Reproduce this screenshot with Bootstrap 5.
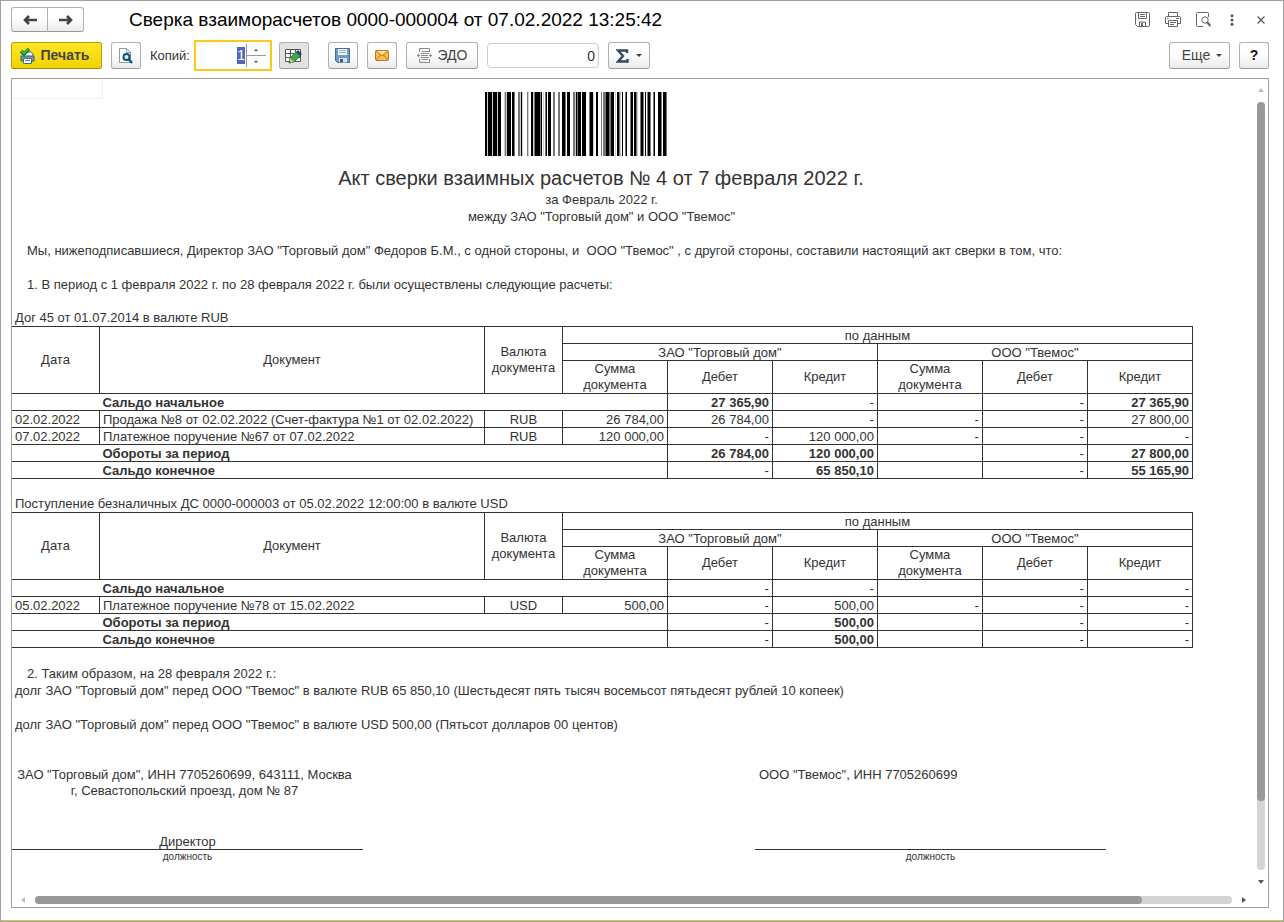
<!DOCTYPE html>
<html lang="ru">
<head>
<meta charset="utf-8">
<meta name="viewport" content="width=device-width, initial-scale=1">
<title>Сверка взаиморасчетов</title>
<link href="https://cdn.jsdelivr.net/npm/bootstrap@5.3.0/dist/css/bootstrap.min.css" rel="stylesheet">
<style>
  body { font-family: "Liberation Sans", Arial, sans-serif; font-size: 13px; line-height: 17px; color: #333; background: #fff; }
  .app-window { border: 1px solid #a0a0a0; box-shadow: inset 0 -1px 0 #d5c650; padding: 6px 14px 13px 10px; }
  .app-title { font-size: 19px; line-height: 24px; color: #000; margin-left: 45px; }
  .tool-btn { --bs-btn-padding-x: 0; --bs-btn-padding-y: 0; --bs-btn-border-radius: 3px; --bs-btn-font-size: 14px; --bs-btn-line-height: 17px;
    --bs-btn-color: #444; --bs-btn-border-color: #b0b0b0; --bs-btn-hover-color: #444; --bs-btn-hover-border-color: #999;
    display: flex; align-items: center; justify-content: center; height: 27px; min-width: 30px;
    background: linear-gradient(#fff 40%, #ececec); border-bottom-color: #999; }
  .tool-btn svg, .plain-btn svg { display: block; flex: none; }
  .nav-pair .tool-btn { height: 25px; width: 37px; }
  .print-btn { width: 91px; gap: 6px; font-weight: bold; background: linear-gradient(#ffe627, #f2d200); border-color: #b9a000; border-bottom-color: #a08a00; padding-right: 4px; }
  .pressed-btn { background: #e2e2e2; margin-left: 7px; }
  .edo-btn { width: 72px; gap: 6px; }
  .sum-btn { width: 42px; gap: 7px; }
  .more-btn { width: 61px; gap: 6px; padding-left: 5px; }
  .help-btn { color: #111; font-weight: bold; }
  .plain-btn { border: 0; background: none; padding: 0; }
  .window-tools { gap: 15px; }
  .caret-mark { border: 3px solid transparent; border-top-color: #444; border-bottom: 0; }
  .copies-box { width: 78px; height: 31px; border: 2px solid #fbc81e; background: #fff; }
  .copies-box input, .total-input { font-size: 14px; line-height: 17px; color: #333; text-align: right; }
  .copies-box input { border: 0; outline: 0; padding: 0 1px 0 0; width: 50px; }
  .copies-box input::selection { background: #5067c4; color: #fff; }
  .spin-pair { width: 20px; margin: 2px 2px 2px 0; border-left: 1px solid #999; }
  .spin-pair button { border: 0; background: none; padding: 0; flex: 1; display: flex; align-items: center; justify-content: center; }
  .spin-pair button + button { border-top: 1px solid #999; }
  .total-input { width: 112px; height: 25px; border: 1px solid #ccc; border-radius: 4px; padding: 0 3px; }
  .gap-tools { gap: 9px; }
  .file-tools { margin-left: 10px; }
  .viewer { border: 1px solid #a0a0a0; margin-top: 7px; }
  .sheet { overflow: hidden; padding-top: 13px; color: #333; }
  .start-cell { width: 91px; height: 20px; border: solid #eee; border-width: 0 1px 1px 0; }
  .barcode { display: block; width: 182px; height: 64px; margin-bottom: 9px; }
  .barcode-row { padding-right: 54px; }
  .act-title { font-size: 20px; line-height: 26px; margin: 0; font-weight: 400; padding-right: 3px; }
  .sheet p { margin: 0; padding-left: 3px; }
  .sheet p.text-center { padding: 0 5px 0 3px; }
  .sheet p.indent { padding-left: 15px; }
  .sheet p.spaced { margin-top: 17px; }
  .sheet p.table-note { line-height: 16px; }
  .recon { width: calc(100% + 1px); table-layout: fixed; border-collapse: collapse; line-height: 16px; margin-left: -1px; }
  .recon th, .recon td { border: 1px solid #333; padding: 0 3px; height: 17px; }
  .recon thead th { font-weight: 400; text-align: center; }
  .recon td, .recon .doc, .recon thead .group { line-height: 15px; padding-top: 1px; }
  .recon td { text-align: right; white-space: nowrap; }
  .recon td:first-child, .recon .doc { text-align: left; }
  .recon .cur { text-align: center; }
  .recon tbody .none { border-right-style: hidden; }
  .recon .strong th, .recon .strong td { font-weight: bold; }
  .recon .strong .dash { font-weight: 400; }
  .sign-row { margin-top: 34px; }
  .sign-left, .sign-right { width: 351px; }
  .sign-right { margin-right: 87px; }
  .sign-org { height: 66px; line-height: 16px; padding-left: 4px; }
  .sign-left .sign-org { padding: 0 10px 0 4px; text-align: center; }
  .sign-post { height: 17px; border-bottom: 1px solid #333; text-align: center; }
  .sign-note { font-size: 10px; line-height: 14px; text-align: center; }
  .vbar { width: 8px; margin: 8px 3px 6px 64px; }
  .hbar { height: 16px; padding: 1px 22px 0 9px; gap: 9px; }
  .bar-track { background: #d5d5d5; border-radius: 4px; }
  .bar-thumb { background: #999; border-radius: 4px; }
  .vbar .bar-track { width: 8px; margin: 9px 0; }
  .hbar .bar-track { height: 8px; }
</style>
</head>
<body>
<main class="app-window d-flex flex-column min-vh-100">
  <header class="d-flex align-items-center">
    <div class="btn-group nav-pair">
      <button class="btn tool-btn" type="button" aria-label="Назад"><svg width="14" height="10" viewBox="0 0 14 10"><path d="M6 1 2 5l4 4M2 5h12" fill="none" stroke="#444" stroke-width="2.6"/></svg></button>
      <button class="btn tool-btn" type="button" aria-label="Вперед"><svg width="14" height="10" viewBox="0 0 14 10"><path d="m8 1 4 4-4 4M12 5H0" fill="none" stroke="#444" stroke-width="2.6"/></svg></button>
    </div>
    <h1 class="app-title mb-0 fw-normal">Сверка взаиморасчетов 0000-000004 от 07.02.2022 13:25:42</h1>
    <div class="d-flex align-items-center ms-auto window-tools">
      <button class="plain-btn" type="button" aria-label="Сохранить"><svg width="15" height="15" viewBox="0 0 15 15" fill="none" stroke="#666"><path d="M.5 1.500q0-1 1-1h12q1 0 1 1v12q0 1-1 1h-11l-2-2zM3.500.5v6h8v-6M5 2.500h5M5 4.500h5"/><path d="M4.500 14v-4h6v4"/><path d="M6 11h2v3H6z" fill="#666" stroke="none"/></svg></button>
      <button class="plain-btn" type="button" aria-label="Печать"><svg width="16" height="15" viewBox="0 0 16 15" fill="none" stroke="#666"><path d="M3.500 4V.5h9V4M3 11.500H.5v-6q0-1 1-1h13q1 0 1 1v6H13"/><path d="M3.500 8.500h9v6h-9zM5 10.500h6M5 12.500h4M2 6.500h1.500M11 6.500h3"/></svg></button>
      <button class="plain-btn" type="button" aria-label="Предпросмотр"><svg width="15" height="15" viewBox="0 0 15 15" fill="none" stroke="#666"><path d="M12.500 5V1.500q0-1-1-1h-10q-1 0-1 1v12q0 1 1 1H7"/><circle cx="9" cy="8" r="3.200"/><path d="m11 10 3.500 4" stroke-width="2.200"/></svg></button>
      <button class="plain-btn px-1" type="button" aria-label="Меню"><svg width="4" height="12" viewBox="0 0 4 12" fill="#555"><circle cx="2" cy="1.700" r="1.500"/><circle cx="2" cy="6" r="1.500"/><circle cx="2" cy="10.300" r="1.500"/></svg></button>
      <button class="plain-btn px-1" type="button" aria-label="Закрыть"><svg width="8" height="8" viewBox="0 0 8 8"><path d="m.5.5 7 7m0-7-7 7" stroke="#555" stroke-width="1.200"/></svg></button>
    </div>
  </header>

  <div class="d-flex align-items-center gap-tools mt-2" role="toolbar">
    <button class="btn tool-btn print-btn" type="button"><svg width="15" height="16" viewBox="0 0 15 16"><path d="M4 4h7l2 2v3H4z" fill="#fff" stroke="#45708c"/><path d="M1 8h13v5H1z" fill="#6d9dba" stroke="#325b75"/><path d="M3.500 10.500h8v5h-8z" fill="#fff" stroke="#45708c"/><path d="M5 12.500h5" stroke="#77a"/><path d="m1 3 3 3 5-5" fill="none" stroke="#127d22" stroke-width="3.500"/><path d="m1.500 3 2.500 2.500L8.500 1" fill="none" stroke="#42c342" stroke-width="1.500"/></svg>Печать</button>
    <button class="btn tool-btn" type="button" aria-label="Просмотр"><svg width="14" height="16" viewBox="0 0 14 16"><path d="M.5.5h7l4 4v10H.5z" fill="#fff" stroke="#8a9ba8"/><path d="M7.500.5v4h4" fill="none" stroke="#8a9ba8"/><circle cx="7.500" cy="9" r="3" fill="#dff0fa" stroke="#125278" stroke-width="2"/><path d="m9.500 11 3.500 4" stroke="#125278" stroke-width="2.500"/></svg></button>
    <div class="d-flex align-items-center">
      <label for="copies">Копий:</label>
      <div class="copies-box d-flex ms-1">
        <input id="copies" type="text" value="1">
        <div class="spin-pair d-flex flex-column"><button type="button" aria-label="Больше"><svg width="4" height="2"><path d="M0 2 2 0l2 2z" fill="#444"/></svg></button><button type="button" aria-label="Меньше"><svg width="4" height="2"><path d="m0 0 2 2 2-2z" fill="#444"/></svg></button></div>
      </div>
      <button class="btn tool-btn pressed-btn" type="button" aria-label="Редактирование"><svg width="17" height="16" viewBox="0 0 17 16"><path d="M.5 1.500h15v12H.5zM.5 5.500h15M.5 9.500h15M5.500 1.500v12M10.500 1.500v12" fill="#fff" stroke="#555"/><path d="m4 15 1-5 6-6 4 4-6 6z" fill="#3da653" stroke="#287a3b"/><path d="m11 4 2-2 4 4-2 2z" fill="#34475a"/><path d="m4 15 1-5 4 4z" fill="#edbd83"/><path d="m4 15 .5-2L6 14.500z" fill="#333"/></svg></button>
    </div>
    <div class="d-flex align-items-center gap-tools file-tools">
      <button class="btn tool-btn" type="button" aria-label="Сохранить файл"><svg width="15" height="15" viewBox="0 0 15 15"><path d="M.5.500h14v14h-12l-2-2z" fill="#6f9dcb" stroke="#416c9b"/><path d="M3 1h9v6H3z" fill="#fff"/><path d="M4 2.500h7M4 4.500h7" stroke="#9ab"/><path d="M4 10h8v4.500H4z" fill="#dce4ea"/><path d="M5 11h3v3.500H5z" fill="#45617c"/></svg></button>
      <button class="btn tool-btn" type="button" aria-label="Отправить"><svg width="14" height="11" viewBox="0 0 14 11"><rect x=".5" y=".5" width="13" height="10" rx="1" fill="#f6bd55" stroke="#bc7b1b"/><path d="m2 1 5 4 5-4z" fill="#ffe09a"/><path d="m1 1 6 5 6-5M1 10l4.500-5M13 10 8.500 5" fill="none" stroke="#bc7b1b"/></svg></button>
      <button class="btn tool-btn edo-btn" type="button"><svg width="15" height="15" viewBox="0 0 15 15" fill="none" stroke="#888"><path d="M2.500 4V.5h10V4M2.500 11v3.500h10V11M5 3.500h7M4 5.500h8M4 7.500h7M4 9.500h8M5 11.500h6M3 7.500H0M15 7.500h-3M2 5.500l-1.500 2 1.500 2M13 5.500l1.500 2-1.500 2"/></svg>ЭДО</button>
    </div>
    <input class="total-input" type="text" value="0" aria-label="Сумма">
    <button class="btn tool-btn sum-btn" type="button" aria-label="Сумма"><svg width="13" height="14" viewBox="0 0 13 14"><path d="M11 4V1.500H2L7 7l-5 5.500h9.500V10" fill="none" stroke="#34495c" stroke-width="2.400"/></svg><span class="caret-mark"></span></button>
    <button class="btn tool-btn more-btn ms-auto" type="button">Еще<span class="caret-mark"></span></button>
    <button class="btn tool-btn help-btn" type="button">?</button>
  </div>

  <section class="viewer flex-grow-1 d-flex flex-column">
    <div class="flex-grow-1 d-flex">
      <article class="sheet flex-grow-1 position-relative">
        <div class="start-cell position-absolute top-0 start-0"></div>
        <div class="barcode-row d-flex justify-content-center">
        <svg class="barcode" viewBox="0 0 182 64" shape-rendering="crispEdges" role="img" aria-label="Штрихкод">
          <path stroke="#ccc" stroke-width="64" d="M2 32h1m4 0h1m4 0h1m6 0h1m1 0h1m13 0h1m1 0h1m5 0h1m4 0h1m7 0h1m1 0h1m31 0h1m17 0h1m3 0h1m5 0h1m7 0h1m3 0h1m1 0h1m2 0h1m11 0h1m4 0h1m10 0h1"/>
          <path stroke="#777" stroke-width="64" d="M20 32h1M29 32h1M33 32h2M42 32h1M49 32h1M55 32h1M60 32h1M68 32h2M73 32h2M80 32h1M88 32h2M92 32h1M104 32h1M116 32h1M118 32h3M124 32h2M134 32h1M140 32h1M145 32h1M151 32h1M155 32h1M158 32h1M162 32h1M165 32h1M168 32h1M176 32h1M181 32h1"/>
          <path stroke="#000" stroke-width="64" d="M0 32h2M3 32h4M8 32h4M13 32h3M22 32h4M27 32h2M36 32h1M46 32h2M50 32h5M56 32h1M61 32h1M63 32h3M77 32h3M82 32h3M91 32h1M93 32h3M97 32h4M105 32h3M111 32h2M121 32h3M126 32h3M132 32h2M137 32h1M141 32h1M146 32h2M149 32h2M156 32h2M160 32h1M163 32h2M169 32h1M173 32h3M178 32h3"/>
        </svg>
        </div>
        <h2 class="act-title text-center">Акт сверки взаимных расчетов № 4 от 7 февраля 2022 г.</h2>
        <p class="text-center">за Февраль 2022 г.</p>
        <p class="text-center">между ЗАО "Торговый дом" и ООО "Твемос"</p>
        <p class="indent spaced">Мы, нижеподписавшиеся, Директор ЗАО "Торговый дом" Федоров Б.М., с одной стороны, и&nbsp; ООО "Твемос" , с другой стороны, составили настоящий акт сверки в том, что:</p>
        <p class="indent spaced">1. В период с 1 февраля 2022 г. по 28 февраля 2022 г. были осуществлены следующие расчеты:</p>
        <p class="spaced table-note">Дог 45 от 01.07.2014 в валюте RUB</p>
        <table class="recon">
          <colgroup><col style="width:88px"><col><col style="width:78px"><col span="6" style="width:105px"></colgroup>
          <thead>
            <tr><th rowspan="3">Дата</th><th rowspan="3">Документ</th><th rowspan="3">Валюта документа</th><th class="group" colspan="6">по данным</th></tr>
            <tr><th class="group" colspan="3">ЗАО "Торговый дом"</th><th class="group" colspan="3">ООО "Твемос"</th></tr>
            <tr><th>Сумма документа</th><th>Дебет</th><th>Кредит</th><th>Сумма документа</th><th>Дебет</th><th>Кредит</th></tr>
          </thead>
          <tbody>
            <tr class="strong"><td class="none"></td><th class="doc" colspan="3">Сальдо начальное</th><td>27 365,90</td><td class="dash">-</td><td></td><td class="dash">-</td><td>27 365,90</td></tr>
            <tr><td>02.02.2022</td><td class="doc">Продажа №8 от 02.02.2022 (Счет-фактура №1 от 02.02.2022)</td><td class="cur">RUB</td><td>26 784,00</td><td>26 784,00</td><td>-</td><td>-</td><td>-</td><td>27 800,00</td></tr>
            <tr><td>07.02.2022</td><td class="doc">Платежное поручение №67 от 07.02.2022</td><td class="cur">RUB</td><td>120 000,00</td><td>-</td><td>120 000,00</td><td>-</td><td>-</td><td>-</td></tr>
            <tr class="strong"><td class="none"></td><th class="doc" colspan="3">Обороты за период</th><td>26 784,00</td><td>120 000,00</td><td></td><td class="dash">-</td><td>27 800,00</td></tr>
            <tr class="strong"><td class="none"></td><th class="doc" colspan="3">Сальдо конечное</th><td class="dash">-</td><td>65 850,10</td><td></td><td class="dash">-</td><td>55 165,90</td></tr>
          </tbody>
        </table>
        <p class="spaced table-note">Поступление безналичных ДС 0000-000003 от 05.02.2022 12:00:00 в валюте USD</p>
        <table class="recon">
          <colgroup><col style="width:88px"><col><col style="width:78px"><col span="6" style="width:105px"></colgroup>
          <thead>
            <tr><th rowspan="3">Дата</th><th rowspan="3">Документ</th><th rowspan="3">Валюта документа</th><th class="group" colspan="6">по данным</th></tr>
            <tr><th class="group" colspan="3">ЗАО "Торговый дом"</th><th class="group" colspan="3">ООО "Твемос"</th></tr>
            <tr><th>Сумма документа</th><th>Дебет</th><th>Кредит</th><th>Сумма документа</th><th>Дебет</th><th>Кредит</th></tr>
          </thead>
          <tbody>
            <tr class="strong"><td class="none"></td><th class="doc" colspan="3">Сальдо начальное</th><td class="dash">-</td><td class="dash">-</td><td></td><td class="dash">-</td><td class="dash">-</td></tr>
            <tr><td>05.02.2022</td><td class="doc">Платежное поручение №78 от 15.02.2022</td><td class="cur">USD</td><td>500,00</td><td>-</td><td>500,00</td><td>-</td><td>-</td><td>-</td></tr>
            <tr class="strong"><td class="none"></td><th class="doc" colspan="3">Обороты за период</th><td class="dash">-</td><td>500,00</td><td></td><td class="dash">-</td><td class="dash">-</td></tr>
            <tr class="strong"><td class="none"></td><th class="doc" colspan="3">Сальдо конечное</th><td class="dash">-</td><td>500,00</td><td></td><td class="dash">-</td><td class="dash">-</td></tr>
          </tbody>
        </table>
        <p class="indent spaced">2. Таким образом, на 28 февраля 2022 г.:</p>
        <p>долг ЗАО "Торговый дом" перед ООО "Твемос" в валюте RUB 65 850,10 (Шестьдесят пять тысяч восемьсот пятьдесят рублей 10 копеек)</p>
        <p class="spaced">долг ЗАО "Торговый дом" перед ООО "Твемос" в валюте USD 500,00 (Пятьсот долларов 00 центов)</p>
        <div class="sign-row d-flex justify-content-between">
          <div class="sign-left">
            <div class="sign-org">ЗАО "Торговый дом", ИНН 7705260699, 643111, Москва г, Севастопольский проезд, дом № 87</div>
            <div class="sign-post">Директор</div>
            <div class="sign-note">должность</div>
          </div>
          <div class="sign-right">
            <div class="sign-org">ООО "Твемос", ИНН 7705260699</div>
            <div class="sign-post"></div>
            <div class="sign-note">должность</div>
          </div>
        </div>
      </article>
      <div class="vbar d-flex flex-column align-items-center" aria-hidden="true">
        <svg width="6" height="6"><path d="m0 5 3-4 3 4z" fill="#bbb"/></svg>
        <div class="bar-track flex-grow-1"><div class="bar-thumb" style="height:91%"></div></div>
        <svg width="6" height="6"><path d="m0 1 3 4 3-4z" fill="#555"/></svg>
      </div>
    </div>
    <div class="hbar d-flex align-items-center" aria-hidden="true">
      <svg width="5" height="6"><path d="M4 0 0 3l4 3z" fill="#bbb"/></svg>
      <div class="bar-track flex-grow-1"><div class="bar-thumb h-100" style="width:92.5%"></div></div>
      <svg width="5" height="6"><path d="m1 0 4 3-4 3z" fill="#555"/></svg>
    </div>
  </section>
</main>
<script src="https://cdn.jsdelivr.net/npm/bootstrap@5.3.0/dist/js/bootstrap.bundle.min.js"></script>
<script>
  document.getElementById('copies').select();
</script>
</body>
</html>
